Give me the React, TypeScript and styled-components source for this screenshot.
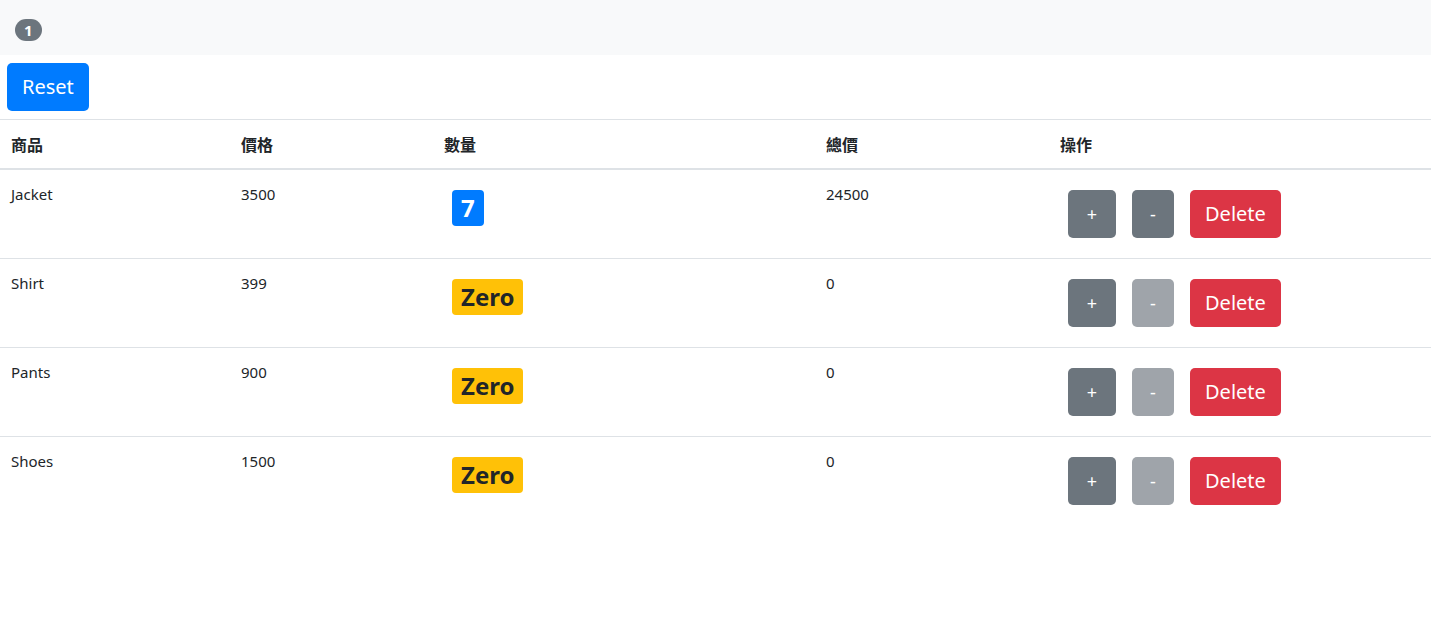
import React, {useState} from 'react';
import styled, {createGlobalStyle} from "styled-components";

const GlobalStyle = createGlobalStyle`
  *, *::before, *::after {
    box-sizing: border-box;
  }
  body {
    margin: 0;
    font-family: "Noto Sans", "Noto Sans CJK TC", sans-serif;
    font-size: 16px;
    line-height: 1.5;
    color: #212529;
    background: #fff;
  }
`

const NavBar = styled.nav`
  background: #f8f9fa;
  height: 55px;
  padding: 0 16px;
  display: flex;
  align-items: center;
`

const PillBadge = styled.span`
  display: inline-block;
  background: #6c757d;
  color: #fff;
  font-size: 15px;
  font-weight: 700;
  line-height: 1;
  padding: 4px 9px 3px;
  margin: 4px 0 0 -1px;
  border-radius: 10em;
`

const Button = styled.button<{ $variant: string; $disabled?: boolean }>`
  margin: 8px;
  font-family: inherit;
  font-size: 20px;
  line-height: 1.5;
  height: 48px;
  padding: 8px 14px;
  border: 1px solid transparent;
  border-radius: 5px;
  color: #fff;
  cursor: pointer;
  background: ${p => p.$variant === 'primary' ? '#007bff' : p.$variant === 'danger' ? '#dc3545' : '#6c757d'};
  opacity: ${p => p.$disabled ? 0.65 : 1};
`

const SignButton = styled(Button)<{ $w: number }>`
  width: ${p => p.$w}px;
  font-size: 18px;
  padding: 8px 0;
`

const Table = styled.table`
  width: 100%;
  border-collapse: collapse;
  table-layout: fixed;
`

const HeadCell = styled.th<{ $w: number }>`
  width: ${p => p.$w}px;
  text-align: left;
  padding: 13px 11px 11px;
  font-weight: 700;
  border-top: 1px solid #dee2e6;
  border-bottom: 2px solid #dee2e6;
  vertical-align: bottom;
`

const Cell = styled.td`
  padding: 13px 11px 12px;
  vertical-align: top;
  font-size: 15px;
  border-top: 1px solid #dee2e6;
`

const Row = styled.tr`
  &:first-child td {
    border-top: none;
  }
`

const CountBadge = styled.span<{ $zero: boolean }>`
  display: inline-block;
  margin: 7px 8px 8px 8px;
  font-size: 24px;
  font-weight: 700;
  line-height: 1;
  padding: 6px 9px;
  border-radius: 4px;
  background: ${p => p.$zero ? '#ffc107' : '#007bff'};
  color: ${p => p.$zero ? '#212529' : '#fff'};
`

const Actions = styled.div`
  display: flex;
  align-items: center;
  margin: -1px 0 0 0;
`

interface IProduct {
    id: number;
    name: string;
    price: number;
    count: number;
}

const inicial: IProduct[] = [
    {id: 1, name: "Jacket", price: 3500, count: 7},
    {id: 2, name: "Shirt", price: 399, count: 0},
    {id: 3, name: "Pants", price: 900, count: 0},
    {id: 4, name: "Shoes", price: 1500, count: 0},
]

function App() {
    const [produtos, setProdutos] = useState<IProduct[]>(inicial)
    const mudar = (id: number, d: number) => {
        setProdutos(produtos.map(p => p.id === id ? {...p, count: Math.max(0, p.count + d)} : p))
    }
    const apagar = (id: number) => setProdutos(produtos.filter(p => p.id !== id))
    const comItens = produtos.filter(p => p.count > 0).length

    return (
        <>
            <GlobalStyle/>
            <NavBar>
                <PillBadge>{comItens}</PillBadge>
            </NavBar>
            <Button $variant="primary" style={{marginLeft: 7}} onClick={() => setProdutos(inicial)}>Reset</Button>
            <Table>
                <thead>
                <tr>
                    <HeadCell $w={230}>商品</HeadCell>
                    <HeadCell $w={203}>價格</HeadCell>
                    <HeadCell $w={382}>數量</HeadCell>
                    <HeadCell $w={234}>總價</HeadCell>
                    <HeadCell $w={382}>操作</HeadCell>
                </tr>
                </thead>
                <tbody>
                {produtos.map(p => (
                    <Row key={p.id}>
                        <Cell>{p.name}</Cell>
                        <Cell>{p.price}</Cell>
                        <Cell>
                            <CountBadge $zero={p.count === 0}>{p.count === 0 ? "Zero" : p.count}</CountBadge>
                        </Cell>
                        <Cell>{p.price * p.count}</Cell>
                        <Cell>
                            <Actions>
                                <SignButton $variant="secondary" $w={48} onClick={() => mudar(p.id, 1)}>+</SignButton>
                                <SignButton $variant="secondary" $w={42} $disabled={p.count === 0}
                                            onClick={() => mudar(p.id, -1)}>-</SignButton>
                                <Button $variant="danger" onClick={() => apagar(p.id)}>Delete</Button>
                            </Actions>
                        </Cell>
                    </Row>
                ))}
                </tbody>
            </Table>
        </>
    );
}

export default App;
